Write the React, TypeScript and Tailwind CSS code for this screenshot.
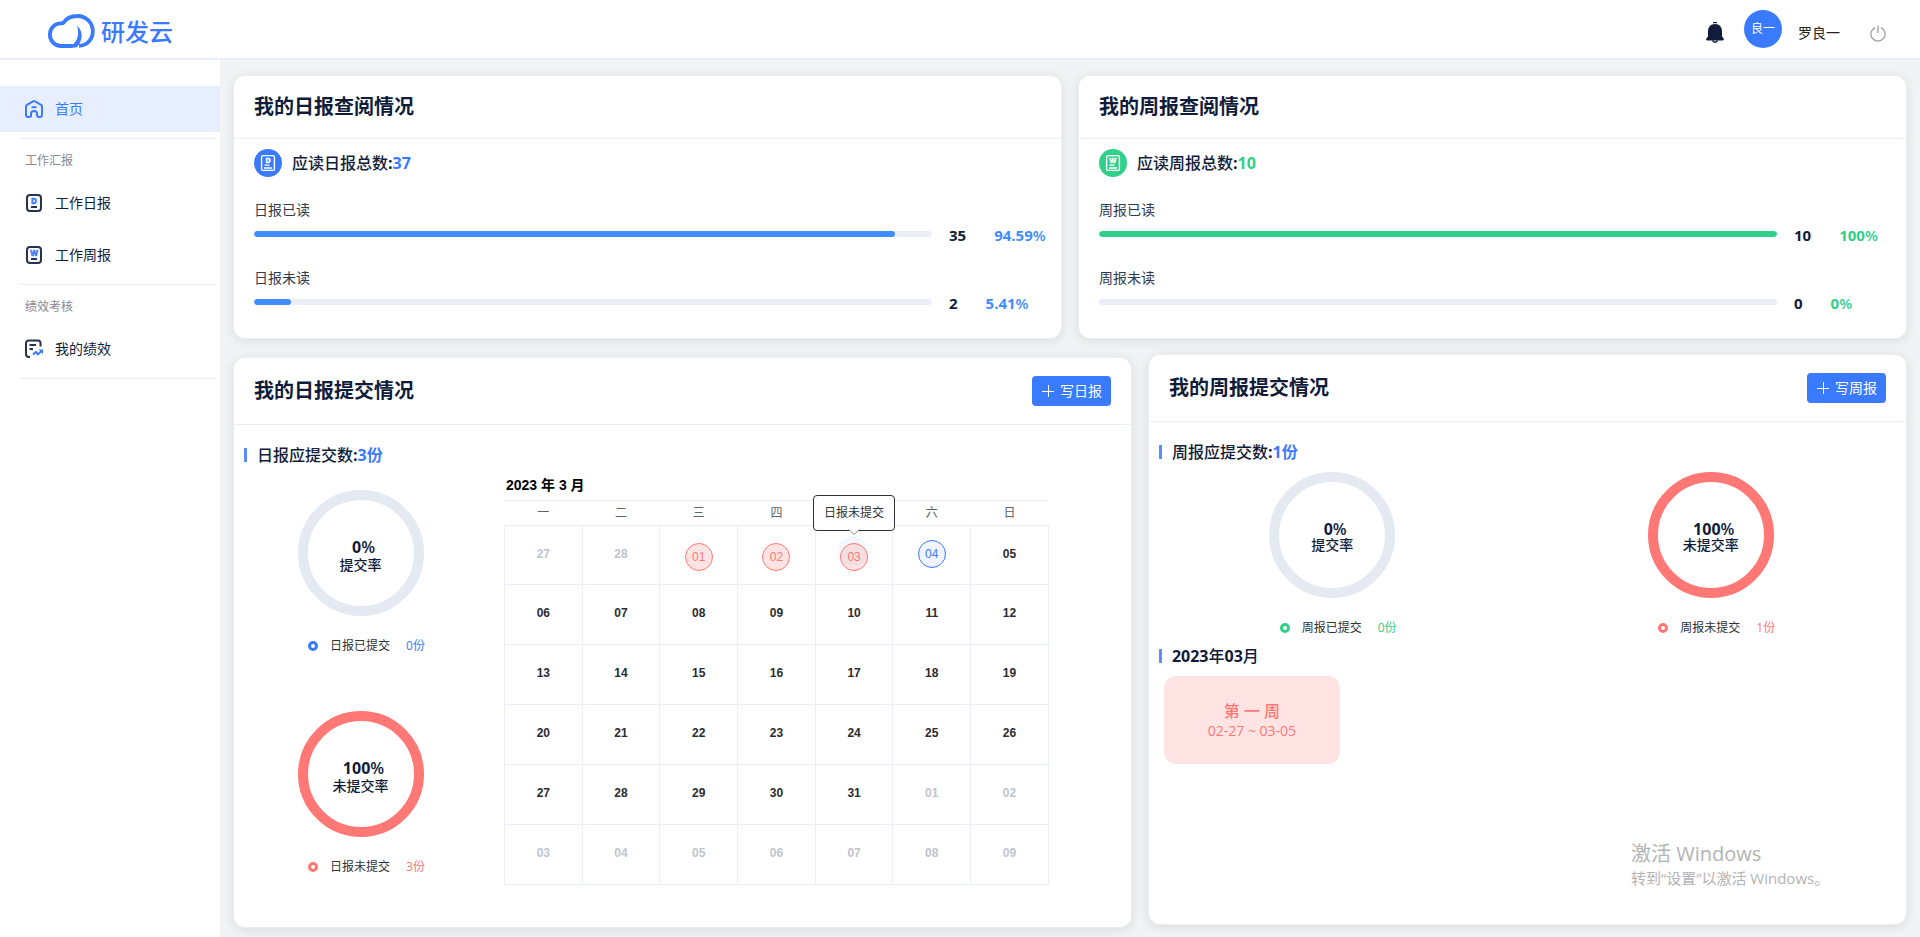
import clsx from "clsx";
import type { ReactNode } from "react";

type Tone = "blue" | "green" | "red";

const toneText: Record<Tone, string> = {
  blue: "text-[#3a7afe]",
  green: "text-[#30d08b]",
  red: "text-[#ff7875]",
};

const toneBorder: Record<Tone, string> = {
  blue: "border-[#3a7afe]",
  green: "border-[#30d08b]",
  red: "border-[#ff7875]",
};

/* ---------- icons ---------- */

function LogoMark() {
  return (
    <svg width="47" height="35" viewBox="0 0 47 35" fill="none" aria-hidden>
      <path
        d="M25 32H13A11.2 11.2 0 0 1 1.9 20.7C1.9 14.4 6.4 9.6 12.6 9.4L15.2 9C18 4.6 23.2 2 29 2A15.2 15.2 0 0 1 44.8 17.2C44.8 25.4 39 31.6 31 31.8"
        stroke="#3a7afe"
        strokeWidth="3.8"
        strokeLinejoin="round"
      />
      <path
        d="M29 11.6C36 18 34.5 27.5 28.6 33.6H20C28 30.5 32.4 22 29 11.6Z"
        fill="#3a7afe"
      />
    </svg>
  );
}

function HomeIcon() {
  return (
    <svg width="20" height="20" viewBox="0 0 20 20" fill="none" stroke="#3a7afe" strokeWidth="2" aria-hidden>
      <path
        d="M7 18V15A3 3 0 0 1 13 15V16A2 2 0 0 0 15 18H16A2 2 0 0 0 18 16V7.6A2 2 0 0 0 17 5.9L11 2.4A2 2 0 0 0 9 2.4L3 5.9A2 2 0 0 0 2 7.6V16A2 2 0 0 0 4 18H5A2 2 0 0 0 7 16"
        strokeLinejoin="round"
      />
      <path d="M7.5 8.2H12.5" />
    </svg>
  );
}

function ReportIcon({ letter }: { letter: string }) {
  return (
    <svg width="20" height="20" viewBox="0 0 20 20" fill="none" aria-hidden>
      <rect x="3" y="2" width="14" height="16" rx="3" stroke="#26324e" strokeWidth="2" />
      <text
        x="10"
        y="11"
        textAnchor="middle"
        fontSize="8"
        fontWeight="700"
        fill="#3a7afe"
        stroke="#3a7afe"
        strokeWidth="0.6"
      >
        {letter}
      </text>
      <path d="M7 14H13" stroke="#26324e" strokeWidth="2" />
    </svg>
  );
}

function PerformanceIcon() {
  return (
    <svg width="20" height="20" viewBox="0 0 20 20" fill="none" strokeWidth="2" aria-hidden>
      <path d="M6 18H5A3 3 0 0 1 2 15V4A2.5 2.5 0 0 1 4.5 1.5H14A2.5 2.5 0 0 1 16.5 4V7.5" stroke="#26324e" />
      <path d="M5.5 6H12M5.5 10H9" stroke="#26324e" />
      <path d="M9 15.6L12 13L14 15.4L17.6 12" stroke="#3a7afe" />
      <path d="M14.5 10.5H19V15Z" fill="#3a7afe" />
    </svg>
  );
}

function BadgeIcon({ letter, tone }: { letter: string; tone: Tone }) {
  return (
    <svg width="28" height="28" viewBox="0 0 28 28" fill="none" aria-hidden>
      <circle cx="14" cy="14" r="14" fill={tone === "blue" ? "#3a7afe" : "#30d08b"} />
      <rect x="7.6" y="6.6" width="12.8" height="14.8" rx="1.5" stroke="#fff" strokeWidth="1.4" />
      <text
        x="14"
        y="14.2"
        textAnchor="middle"
        fontSize="7"
        fontWeight="700"
        fill="#fff"
        stroke="#fff"
        strokeWidth="0.4"
      >
        {letter}
      </text>
      <path d="M10.5 16.2H15.5M10 19H18" stroke="#fff" strokeWidth="1.3" />
    </svg>
  );
}

function BellIcon() {
  return (
    <svg width="18" height="22" viewBox="0 0 18 22" fill="#101c3a" aria-hidden>
      <path d="M7 0H11V1.2H7Z" />
      <path d="M9 2C4.5 2 2 5.2 2 9.4V14.5L0.4 16.6C-0.2 17.8 0.2 18.4 1.2 18.4H16.8C17.8 18.4 18.2 17.8 17.6 16.6L16 14.5V9.4C16 5.2 13.5 2 9 2Z" />
      <path d="M6.6 18.4A2.5 2.5 0 0 0 11.4 18.4" fill="none" stroke="#101c3a" strokeWidth="1.6" />
    </svg>
  );
}

function PowerIcon() {
  return (
    <svg width="16" height="17" viewBox="0 0 16 17" fill="none" stroke="#9a9da3" strokeWidth="1.3" aria-hidden>
      <path d="M5 2.6A7.1 7.1 0 1 0 11 2.6" />
      <path d="M8 0.5V8" />
    </svg>
  );
}

function PlusIcon() {
  return (
    <svg width="12" height="12" viewBox="0 0 12 12" stroke="#fff" strokeWidth="1" aria-hidden>
      <path d="M0 6.5H12M6.5 0V12" />
    </svg>
  );
}

/* ---------- shell ---------- */

function TopBar() {
  return (
    <header className="flex h-[60px] items-center justify-between border-b-2 border-[#ebedfb] bg-white pl-12 pr-[34px]">
      <a href="#" className="flex items-center gap-1.5 pt-[5px]">
        <LogoMark />
        <span className="text-2xl leading-8 font-medium text-[#3a7afe]">研发云</span>
      </a>
      <div className="flex items-center">
        <button type="button" aria-label="通知" className="mt-2">
          <BellIcon />
        </button>
        <span className="ml-5 flex size-[38px] items-center justify-center rounded-full bg-[#3a7afe] text-xs text-white">
          良一
        </span>
        <span className="ml-4 mt-2 text-sm text-[#222]">罗良一</span>
        <button type="button" aria-label="退出" className="ml-[30px] mt-2">
          <PowerIcon />
        </button>
      </div>
    </header>
  );
}

function NavItem({ icon, label, active = false }: { icon: ReactNode; label: string; active?: boolean }) {
  return (
    <a
      href="#"
      className={clsx(
        "mb-1.5 flex h-[46px] items-center gap-[11px] pl-6 text-sm",
        active ? "bg-[#e6eeff] text-[#3a7afe]" : "text-[#101c3a]",
      )}
    >
      {icon}
      {label}
    </a>
  );
}

function NavDivider() {
  return <hr className="ml-5 mr-[5px] border-[#ebecf5]" />;
}

function NavLabel({ children }: { children: ReactNode }) {
  return <p className="flex h-[41px] items-center pt-0.5 pl-[25px] text-xs text-[#86888d]">{children}</p>;
}

function Sidebar() {
  return (
    <nav className="w-[220px] shrink-0 bg-white pt-[26px]">
      <NavItem icon={<HomeIcon />} label="首页" active />
      <NavDivider />
      <NavLabel>工作汇报</NavLabel>
      <NavItem icon={<ReportIcon letter="D" />} label="工作日报" />
      <NavItem icon={<ReportIcon letter="W" />} label="工作周报" />
      <NavDivider />
      <NavLabel>绩效考核</NavLabel>
      <NavItem icon={<PerformanceIcon />} label="我的绩效" />
      <NavDivider />
    </nav>
  );
}

/* ---------- cards ---------- */

function Card({
  title,
  action,
  className,
  children,
}: {
  title: string;
  action?: string;
  className?: string;
  children: ReactNode;
}) {
  return (
    <section
      className={clsx(
        "rounded-xl border border-[#ebeef5] bg-white shadow-[0_2px_12px_0_rgba(0,0,0,0.1)]",
        className,
      )}
    >
      <div
        className={clsx(
          "flex items-center justify-between border-b border-[#ebeef5] px-5",
          action ? "h-[67px]" : "h-[63px]",
        )}
      >
        <h2 className="text-xl leading-7 font-bold text-[#101c3a]">{title}</h2>
        {action && (
          <button
            type="button"
            className="flex h-[30px] items-center gap-1.5 rounded bg-[#3a7afe] pl-2.5 pr-[9px] text-sm text-white"
          >
            <PlusIcon />
            {action}
          </button>
        )}
      </div>
      {children}
    </section>
  );
}

function ReadRow({ label, count, percent, tone }: { label: string; count: number; percent: number; tone: Tone }) {
  return (
    <div>
      <p className="text-sm leading-5 text-[#303a50]">{label}</p>
      <div className="mt-1 flex h-5 items-center">
        <div className="h-1.5 flex-1 overflow-hidden rounded-full bg-[#ebeef5]">
          <div
            className={clsx("h-full rounded-full", tone === "blue" ? "bg-[#3f8cff]" : "bg-[#30d08b]")}
            style={{ width: `${percent}%` }}
          />
        </div>
        <div className="flex w-[109px] gap-7 pt-0.5 pl-[17px] text-[15px] leading-5 font-bold whitespace-nowrap">
          <span className="text-[#101c3a]">{count}</span>
          <span className={tone === "blue" ? "text-[#3f8cff]" : toneText[tone]}>
            {percent}
            <span className="font-semibold">%</span>
          </span>
        </div>
      </div>
    </div>
  );
}

function ReadCard({
  title,
  letter,
  totalLabel,
  total,
  tone,
  rows,
}: {
  title: string;
  letter: string;
  totalLabel: string;
  total: number;
  tone: Tone;
  rows: { label: string; count: number; percent: number }[];
}) {
  return (
    <Card title={title}>
      <div className="px-5 pt-2.5 pb-[26px]">
        <div className="flex items-center gap-2.5">
          <BadgeIcon letter={letter} tone={tone} />
          <p className="text-base leading-7 font-medium text-[#101c3a]">
            {totalLabel}
            <span className="font-bold">
              :<span className={toneText[tone]}>{total}</span>
            </span>
          </p>
        </div>
        <div className="mt-[23px] flex flex-col gap-6">
          {rows.map((row) => (
            <ReadRow key={row.label} tone={tone} {...row} />
          ))}
        </div>
      </div>
    </Card>
  );
}

function SectionTitle({ children }: { children: ReactNode }) {
  return (
    <h3 className="flex h-6 items-center gap-2.5 pl-2.5 text-base font-medium text-[#101c3a]">
      <span className="h-3.5 w-[3px] bg-[#5b8fff]" />
      <span>{children}</span>
    </h3>
  );
}

function DueCount({ children }: { children: ReactNode }) {
  return (
    <span className="font-bold">
      :<span className="text-[#3a7afe]">{children}</span>
    </span>
  );
}

function RateRing({
  percent,
  caption,
  legend,
  count,
  tone,
  tight = false,
}: {
  percent: number;
  caption: string;
  legend: string;
  count: string;
  tone: Tone;
  tight?: boolean;
}) {
  return (
    <div className="flex flex-col items-center">
      <div
        className={clsx(
          "mr-3 flex size-[126px] flex-col items-center justify-center rounded-full border-10 pt-1 text-[#101c3a]",
          percent > 0 ? "border-[#ff7875]" : "border-[#e4e9f2]",
        )}
      >
        <span className={clsx("pl-1.5 text-base font-bold", tight ? "leading-4" : "leading-5")}>
          {percent}
          <span className="font-semibold">%</span>
        </span>
        <span className="text-sm leading-4 font-medium">{caption}</span>
      </div>
      <div className="mt-5 flex h-5 items-center text-xs">
        <span className={clsx("size-2.5 rounded-full border-3", toneBorder[tone])} />
        <span className="ml-3 text-[#303133]">{legend}</span>
        <span className={clsx("ml-4", toneText[tone])}>{count}</span>
      </div>
    </div>
  );
}

/* ---------- calendar ---------- */

const WEEKDAYS = ["一", "二", "三", "四", "五", "六", "日"];

// March 2023 starts on a Wednesday; the grid opens on Mon 27 Feb.
const WEEKS = Array.from({ length: 6 }, (_, week) =>
  Array.from({ length: 7 }, (_, day) => new Date(2023, 1, 27 + week * 7 + day)),
);

const MISSED = [1, 2, 3];
const TODAY = 4;
const HOVERED = 3;

function DayCell({ date }: { date: Date }) {
  const day = date.getDate();
  const label = String(day).padStart(2, "0");
  const inMonth = date.getMonth() === 2;

  if (inMonth && MISSED.includes(day)) {
    return (
      <span className="relative mt-1.5 inline-flex size-7 items-center justify-center rounded-full border border-[#ff7875] bg-[#ff7875]/20 font-normal text-[#ff7875]">
        {label}
        {day === HOVERED && (
          <>
            <span className="absolute -top-2 -left-[3px] -z-10 size-[30px] rounded-full bg-[#f2f8fe]" />
            <span
              role="tooltip"
              className="absolute bottom-[39px] left-1/2 flex h-9 w-[82px] -translate-x-1/2 items-center justify-center rounded border border-[#303133] bg-white text-xs whitespace-nowrap text-[#303133]"
            >
              日报未提交
              <svg width="12" height="6" viewBox="0 0 12 6" className="absolute top-full left-1/2 -mt-px -translate-x-1/2" aria-hidden>
                <path d="M0 0L6 5.4L12 0Z" fill="#fff" />
                <path d="M0.6 0.6L6 5.4L11.4 0.6" fill="none" stroke="#8a8c90" />
              </svg>
            </span>
          </>
        )}
      </span>
    );
  }
  if (inMonth && day === TODAY) {
    return (
      <span className="inline-flex size-7 items-center justify-center rounded-full border border-[#3a7afe] bg-[#f0f4ff] font-normal text-[#3a7afe]">
        {label}
      </span>
    );
  }
  return <span className={inMonth ? "text-[#2a2c30]" : "text-[#c0c4cc]"}>{label}</span>;
}

function Calendar() {
  return (
    <div className="relative z-0 mr-[82px] ml-[5px] flex-1 pt-2 font-['Liberation_Sans','Noto_Sans_CJK_SC',sans-serif]">
      <p className="pb-[5px] pl-0.5 text-sm leading-5 font-bold text-black">2023 年 3 月</p>
      <table className="w-full table-fixed border-collapse text-center text-xs">
        <thead>
          <tr className="h-[25px] border-t border-[#ebeef5]">
            {WEEKDAYS.map((name) => (
              <th key={name} scope="col" className="pb-px font-normal text-[#606266]">
                {name}
              </th>
            ))}
          </tr>
        </thead>
        <tbody>
          {WEEKS.map((week) => (
            <tr key={week[0].toISOString()} className="h-[60px] first:h-[59px]">
              {week.map((date) => (
                <td key={date.toISOString()} className="border border-[#ebedf8] pb-[3px] align-middle font-bold">
                  <DayCell date={date} />
                </td>
              ))}
            </tr>
          ))}
        </tbody>
      </table>
    </div>
  );
}

/* ---------- page ---------- */

export default function App() {
  return (
    <div className="relative flex min-h-screen flex-col bg-[#f2f3f5] font-['Open_Sans','Noto_Sans_CJK_SC',sans-serif]">
      <TopBar />
      <div className="flex flex-1">
        <Sidebar />
        <main className="min-w-0 flex-1 px-[13px] pt-[15px] pb-2">
          <div className="grid grid-cols-2 gap-4">
            <ReadCard
              title="我的日报查阅情况"
              letter="D"
              totalLabel="应读日报总数"
              total={37}
              tone="blue"
              rows={[
                { label: "日报已读", count: 35, percent: 94.59 },
                { label: "日报未读", count: 2, percent: 5.41 },
              ]}
            />
            <ReadCard
              title="我的周报查阅情况"
              letter="W"
              totalLabel="应读周报总数"
              total={10}
              tone="green"
              rows={[
                { label: "周报已读", count: 10, percent: 100 },
                { label: "周报未读", count: 0, percent: 0 },
              ]}
            />
          </div>

          <div className="mt-[15px] grid grid-cols-[45fr_38fr] gap-4">
            <Card title="我的日报提交情况" action="写日报" className="mt-[3px]">
              <div className="pt-[18px] pb-[42px]">
                <SectionTitle>
                  日报应提交数<DueCount>3份</DueCount>
                </SectionTitle>
                <div className="flex">
                  <div className="flex w-[265px] shrink-0 flex-col gap-[55px] pt-[23px]">
                    <RateRing percent={0} caption="提交率" legend="日报已提交" count="0份" tone="blue" />
                    <RateRing percent={100} caption="未提交率" legend="日报未提交" count="3份" tone="red" />
                  </div>
                  <Calendar />
                </div>
              </div>
            </Card>

            <Card title="我的周报提交情况" action="写周报" className="mb-[3px]">
              <div className="pt-[18px]">
                <SectionTitle>
                  周报应提交数<DueCount>1份</DueCount>
                </SectionTitle>
                <div className="mt-2 grid grid-cols-2">
                  <RateRing percent={0} caption="提交率" legend="周报已提交" count="0份" tone="green" tight />
                  <RateRing percent={100} caption="未提交率" legend="周报未提交" count="1份" tone="red" tight />
                </div>
                <div className="mt-1.5">
                  <SectionTitle>
                    <span className="font-bold">2023</span>年<span className="font-bold">03</span>月
                  </SectionTitle>
                </div>
                <div className="mt-2 ml-[15px] flex h-[88px] w-44 flex-col items-center justify-center rounded-xl bg-[#ffe4e3] pt-0.5 text-[#ff7875]">
                  <p className="text-base leading-5 font-medium">第 一 周</p>
                  <p className="text-sm leading-5">02-27 ~ 03-05</p>
                </div>
              </div>
            </Card>
          </div>
        </main>
      </div>

      <div className="pointer-events-none absolute right-[89px] bottom-[49px] w-[200px] whitespace-nowrap text-[#b3b3b3]">
        <p className="text-xl leading-7">激活 Windows</p>
        <p className="text-[15px] leading-5">转到“设置”以激活 Windows。</p>
      </div>
    </div>
  );
}
